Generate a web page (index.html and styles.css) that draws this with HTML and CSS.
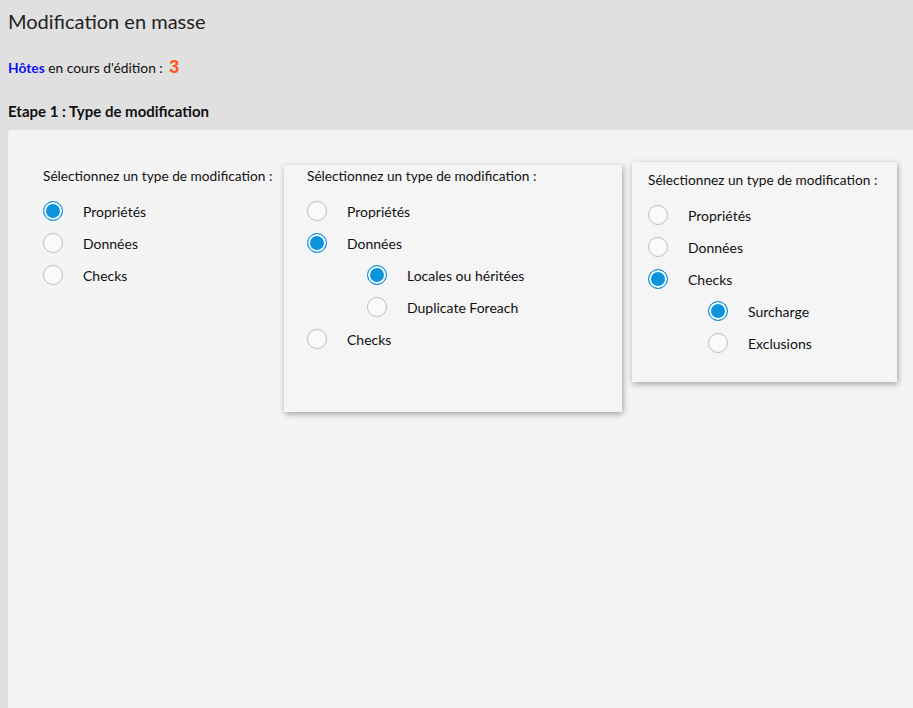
FILE: index.html
```html
<!DOCTYPE html>
<html lang="fr">
<head>
<meta charset="utf-8">
<title>Modification en masse</title>
<link rel="stylesheet" href="styles.css">
</head>
<body>
<div class="page">
  <h1 class="title">Modification en masse</h1>
  <p class="editing"><span class="hosts">Hôtes</span> en cours d'édition : <span class="count">3</span></p>
  <h2 class="step">Etape 1 : Type de modification</h2>
  <div class="panel">
    <div class="col col-plain">
      <div class="prompt">Sélectionnez un type de modification :</div>
      <div class="opts">
        <div class="opt"><span class="radio on"></span><span>Propriétés</span></div>
        <div class="opt"><span class="radio"></span><span>Données</span></div>
        <div class="opt"><span class="radio"></span><span>Checks</span></div>
      </div>
    </div>
    <div class="col card card-a">
      <div class="prompt">Sélectionnez un type de modification :</div>
      <div class="opts">
        <div class="opt"><span class="radio"></span><span>Propriétés</span></div>
        <div class="opt"><span class="radio on"></span><span>Données</span></div>
        <div class="opt sub"><span class="radio on"></span><span>Locales ou héritées</span></div>
        <div class="opt sub"><span class="radio"></span><span>Duplicate Foreach</span></div>
        <div class="opt"><span class="radio"></span><span>Checks</span></div>
      </div>
    </div>
    <div class="col card card-b">
      <div class="prompt">Sélectionnez un type de modification :</div>
      <div class="opts">
        <div class="opt"><span class="radio"></span><span>Propriétés</span></div>
        <div class="opt"><span class="radio"></span><span>Données</span></div>
        <div class="opt"><span class="radio on"></span><span>Checks</span></div>
        <div class="opt sub"><span class="radio on"></span><span>Surcharge</span></div>
        <div class="opt sub"><span class="radio"></span><span>Exclusions</span></div>
      </div>
    </div>
  </div>
</div>
</body>
</html>
```
FILE: styles.css
```css
html, body {
  margin: 0;
  padding: 0;
  height: 100%;
  overflow: hidden;
}
body {
  background: #e0e0e0;
  font-family: Lato, "Open Sans", sans-serif;
  color: #111;
}
.page {
  padding-left: 8px;
  height: 100%;
  display: flex;
  flex-direction: column;
}
.title {
  margin: 8px 0 0 0;
  font-size: 20px;
  font-weight: 400;
  line-height: 26px;
  color: #222;
}
.editing {
  margin: 24px 0 0 0;
  font-size: 13.8px;
  line-height: 18px;
}
.hosts {
  color: #1010ee;
  font-weight: 700;
}
.count {
  color: #ff5722;
  font-family: "Liberation Sans", Arial, sans-serif;
  font-weight: 700;
  font-size: 18px;
  margin-left: 3px;
}
.step {
  margin: 25px 0 0 0;
  font-size: 15px;
  font-weight: 700;
  line-height: 18px;
  color: #111;
}
.panel {
  margin-top: 10px;
  flex: 1;
  background: #f4f4f4;
  border-top-left-radius: 4px;
  display: flex;
  align-items: flex-start;
  padding-left: 35px;
}
.col {
  font-size: 14px;
}
.col-plain {
  width: 241px;
  margin-top: 37px;
}
.card {
  background: #f5f5f5;
  box-shadow: 1px 2px 6px rgba(0, 0, 0, 0.35);
}
.card-a {
  width: 315px;
  margin-top: 35px;
  padding: 2px 0 57px 23px;
}
.card-b {
  width: 249px;
  margin-left: 10px;
  margin-top: 32px;
  padding: 9px 0 23px 16px;
}
.prompt {
  font-size: 13.7px;
  line-height: 18px;
  height: 18px;
}
.opts {
  margin-top: 10px;
}
.opt {
  height: 32px;
  display: flex;
  align-items: center;
  gap: 20px;
}
.opt.sub {
  padding-left: 60px;
}
.radio {
  width: 20px;
  height: 20px;
  box-sizing: border-box;
  border-radius: 50%;
  border: 1.5px solid #bdbdbd;
  background: #fafafa;
  flex: none;
}
.radio.on {
  border-color: #0b94dd;
  background: #0b94dd;
  box-shadow: inset 0 0 0 2px #ffffff;
}
```
